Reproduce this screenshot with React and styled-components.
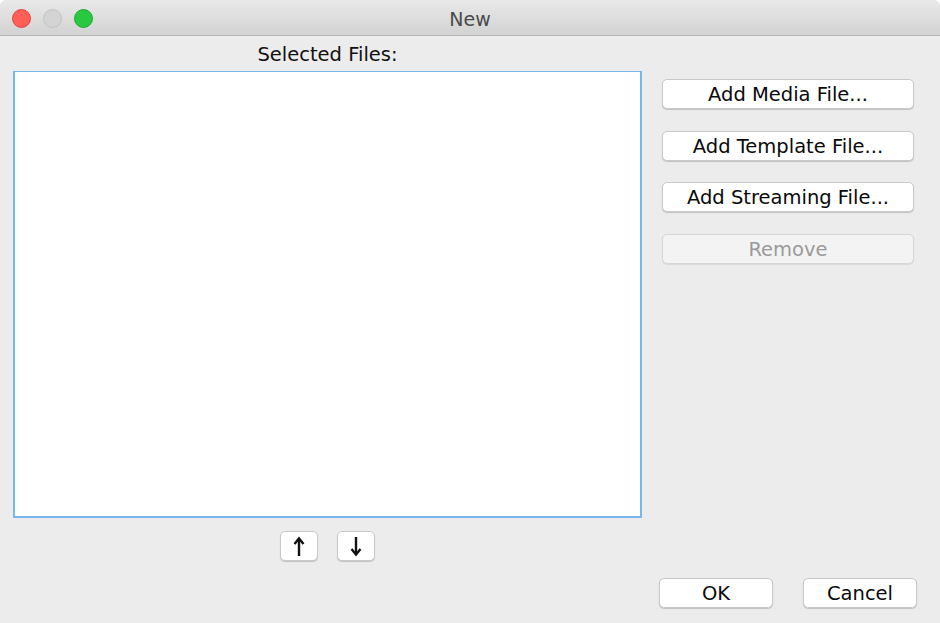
import React from 'react'
import styled, { createGlobalStyle } from 'styled-components'

const Global = createGlobalStyle`
    html, body {
        margin: 0;
        padding: 0;
        background: #ffffff;
    }
    body {
        font-family: "DejaVu Sans", "Noto Sans", sans-serif;
    }
`

function ArrowIcon({ down }) {
    return (
        <svg width="14" height="21" viewBox="0 0 14 21">
            <g transform={down ? 'rotate(180 7 10.5)' : undefined} fill="none" stroke="#111" strokeWidth="2.4" strokeLinecap="butt">
                <line x1="7" y1="3" x2="7" y2="20" />
                <polyline points="2.5,8 7,2.5 11.5,8" strokeLinejoin="miter" />
            </g>
        </svg>
    )
}

export default function App() {
    return (
        <Window>
            <Global />
            <TitleBar>
                <Lights>
                    <Light color="#fe5f57" edge="#e0443e" />
                    <Light color="#d4d4d4" edge="#c2c2c2" />
                    <Light color="#28c840" edge="#1aab29" />
                </Lights>
                <Title>New</Title>
            </TitleBar>

            <Main>
                <LeftColumn>
                    <Label>Selected Files:</Label>
                    <FileList />
                    <ArrowRow>
                        <ArrowButton><ArrowIcon /></ArrowButton>
                        <ArrowButton><ArrowIcon down /></ArrowButton>
                    </ArrowRow>
                </LeftColumn>
                <RightColumn>
                    <Button>Add Media File...</Button>
                    <Button>Add Template File...</Button>
                    <Button>Add Streaming File...</Button>
                    <Button disabled>Remove</Button>
                </RightColumn>
            </Main>

            <Footer>
                <FooterButton>OK</FooterButton>
                <FooterButton>Cancel</FooterButton>
            </Footer>
        </Window>
    )
}

const Window = styled.div`
    width: 940px;
    height: 623px;
    background: #ececec;
    border-top-left-radius: 6px;
    border-top-right-radius: 6px;
    overflow: hidden;
    display: flex;
    flex-direction: column;
`

const TitleBar = styled.div`
    height: 36px;
    box-sizing: border-box;
    position: relative;
    display: flex;
    align-items: center;
    justify-content: center;
    background: linear-gradient(#e9e9e9, #d2d2d2);
    border-bottom: 1px solid #b3b3b3;
`

const Lights = styled.div`
    position: absolute;
    left: 12px;
    top: 9px;
    display: flex;
    gap: 12px;
`

const Light = styled.span`
    width: 19px;
    height: 19px;
    border-radius: 50%;
    box-sizing: border-box;
    background: ${p => p.color};
    border: 1px solid ${p => p.edge};
`

const Title = styled.div`
    font-size: 19px;
    color: #4a4a4a;
    margin-top: 2px;
`

const Main = styled.div`
    display: flex;
    padding-left: 13px;
    gap: 20px;
`

const LeftColumn = styled.div`
    width: 629px;
    display: flex;
    flex-direction: column;
    align-items: center;
`

const Label = styled.div`
    height: 35px;
    line-height: 38px;
    font-size: 19.5px;
    color: #111;
`

const FileList = styled.div`
    width: 100%;
    height: 447px;
    box-sizing: border-box;
    background: #ffffff;
    border: 2px solid #79b6ea;
    border-top-width: 1px;
`

const ArrowRow = styled.div`
    display: flex;
    gap: 19px;
    margin-top: 13px;
`

const BaseButton = styled.button`
    box-sizing: border-box;
    height: 30px;
    background: #ffffff;
    border: 1px solid #c9c9c9;
    border-radius: 5px;
    box-shadow: 0 1px 1px rgba(0, 0, 0, 0.18);
    font-family: "DejaVu Sans", "Noto Sans", sans-serif;
    font-size: 19.5px;
    color: #0a0a0a;
    padding: 1px 0 0;
    display: flex;
    align-items: center;
    justify-content: center;
`

const ArrowButton = styled(BaseButton)`
    width: 38px;
    padding: 0;
`

const RightColumn = styled.div`
    width: 252px;
    display: flex;
    flex-direction: column;
    gap: 21.5px;
    padding-top: 43px;
`

const Button = styled(BaseButton)`
    width: 100%;
    &:disabled {
        background: #f3f3f3;
        color: #9a9a9a;
        border-color: #d6d6d6;
        box-shadow: 0 1px 1px rgba(0, 0, 0, 0.08);
    }
`

const Footer = styled.div`
    display: flex;
    justify-content: flex-end;
    gap: 30px;
    padding-right: 23px;
    margin-top: 17px;
`

const FooterButton = styled(BaseButton)`
    width: 114px;
`
